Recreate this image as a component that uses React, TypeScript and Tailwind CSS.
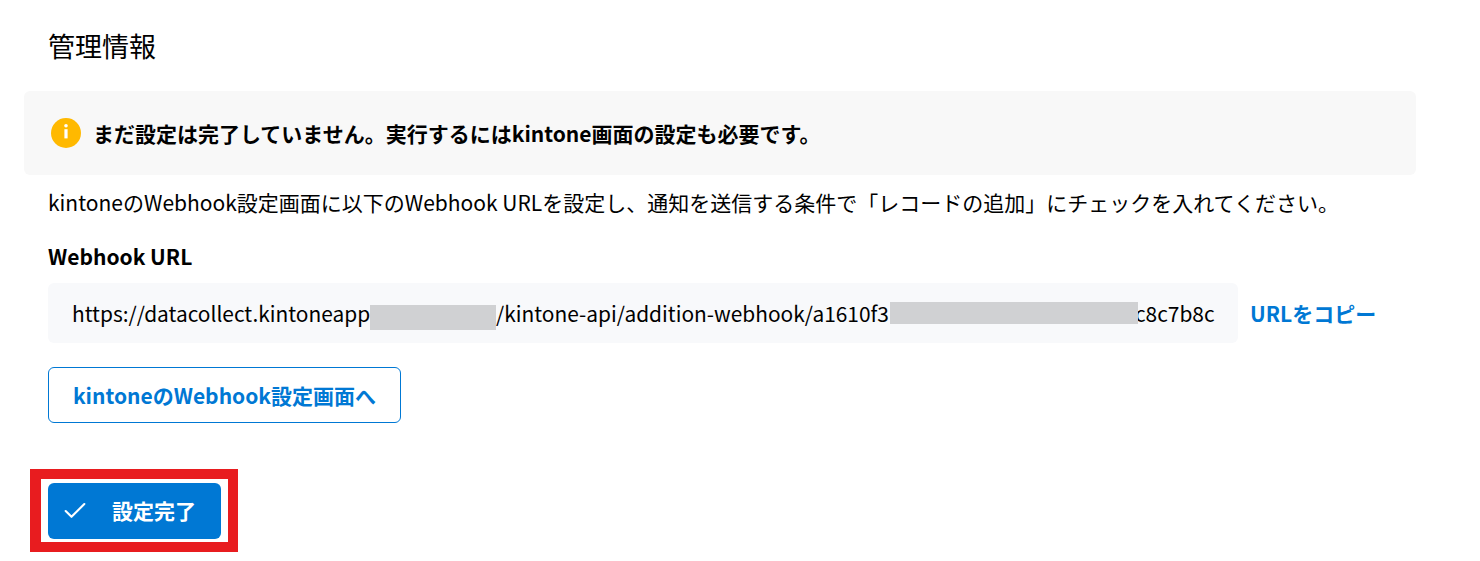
import React from 'react';
import { Check } from 'lucide-react';

const FONT = "font-['Noto_Sans_CJK_JP','Noto_Sans',sans-serif]";

export default function App() {
  return (
    <div className={`${FONT} relative w-[1480px] h-[561px] overflow-hidden bg-white text-black pl-6 pr-16`}>
      {/* Heading */}
      <h2 className="pl-6 pt-[26px] text-[27px] leading-[40px] font-normal">管理情報</h2>

      {/* Notice */}
      <div className="mt-[25px] flex h-[84px] items-center gap-[12px] rounded-md bg-[#f8f8f8] pl-[27px]">
        <svg width="30" height="30" viewBox="0 0 30 30" className="shrink-0">
          <circle cx="15" cy="15" r="15" fill="#ffb900" />
          <rect x="13.4" y="11.2" width="3.2" height="9.2" fill="#fff" />
          <circle cx="15" cy="7.7" r="1.8" fill="#fff" />
        </svg>
        <p className="text-[21px] font-bold leading-[30px]">まだ設定は完了していません。実行するにはkintone画面の設定も必要です。</p>
      </div>

      <div className="pl-6">
        <p className="mt-[12px] text-[21px] leading-[30px]">
          kintoneのWebhook設定画面に以下のWebhook URLを設定し、通知を送信する条件で「レコードの追加」にチェックを入れてください。
        </p>

        <p className="mt-[24px] text-[21px] font-bold leading-[30px]">Webhook URL</p>

        {/* URL row */}
        <div className="mt-[12px] flex items-center">
          <div className="flex h-[60px] w-[1190px] items-center whitespace-nowrap rounded-md bg-[#f8f9fb] pl-6 pt-px text-[20.9px]">
            <span>https://datacollect.kintoneapp</span>
            <span className="mt-[21px] inline-block h-[25px] w-[126px] self-start bg-[#d0d1d3]" />
            <span>/kintone-api/addition-webhook/a1610f3</span>
            <span className="relative -mr-[3px] ml-px mt-[18px] inline-block h-[22px] w-[248px] self-start bg-[#d0d1d3]" />
            <span>c8c7b8c</span>
          </div>
          <a className="ml-3 pt-px text-[21px] font-bold text-[#0078d4]">URLをコピー</a>
        </div>

        <button className="mt-6 flex h-[56px] w-[353px] items-center justify-center rounded-md border border-[#0078d4] bg-white pt-px text-[21px] font-bold text-[#0078d4]">
          kintoneのWebhook設定画面へ
        </button>

        <button className="relative mt-[60px] flex h-[56px] w-[173px] items-center rounded-md bg-[#0078d4] pl-[13px] text-[21px] font-bold text-white">
          <Check size={28} strokeWidth={1.8} className="shrink-0" />
          <span className="ml-[23px]">設定完了</span>
        </button>
      </div>

      {/* Red annotation around the button */}
      <div className="absolute left-[30px] top-[469px] h-[83px] w-[208px] border-[10px] border-l-[11px] border-[#e81c1f]" />
    </div>
  );
}
